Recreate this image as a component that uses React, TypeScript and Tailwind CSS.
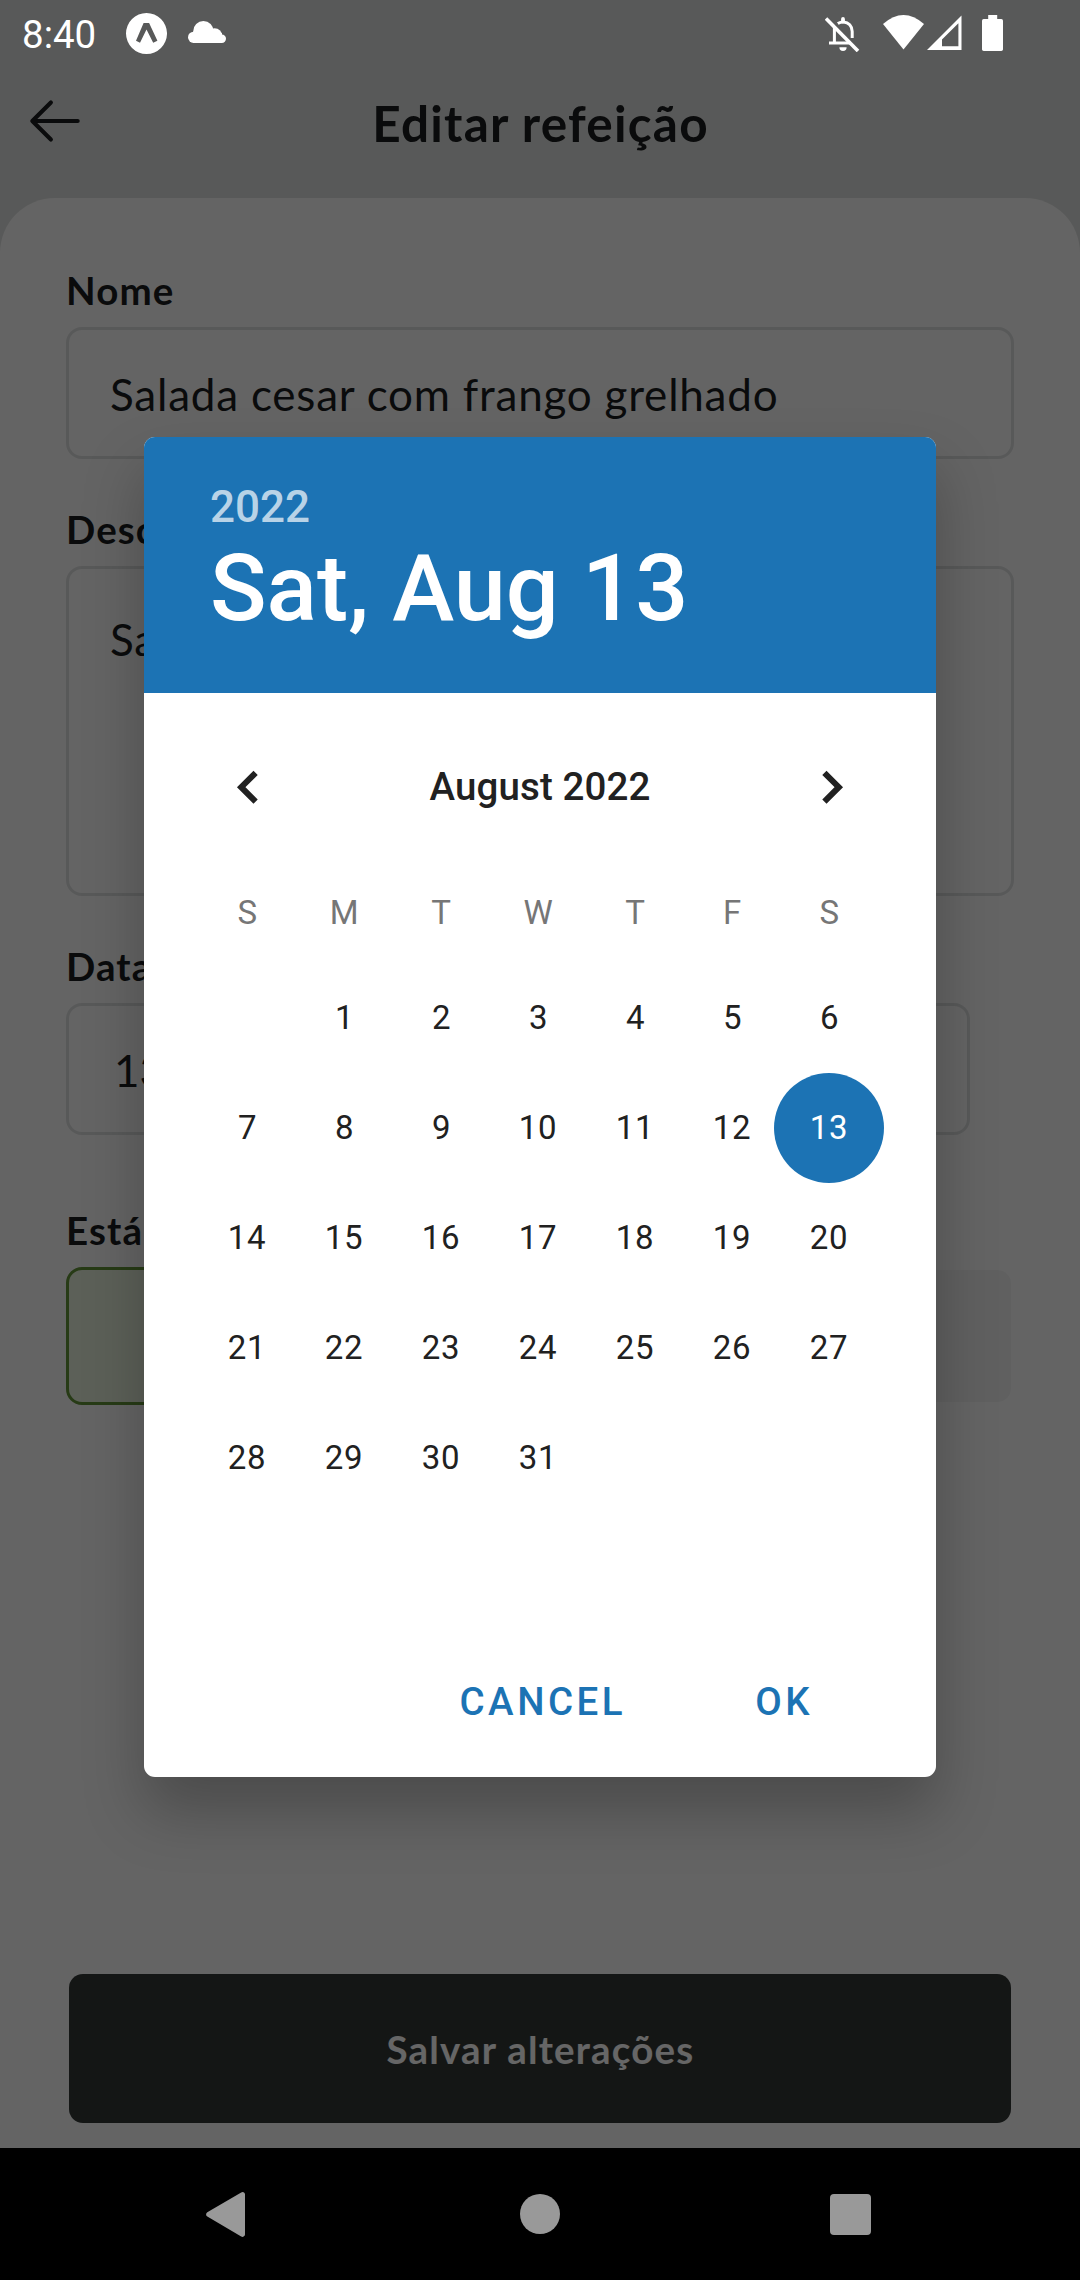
import type { ReactNode } from "react";
import { PiArrowLeft } from "react-icons/pi";

const WEEKDAYS = ["S", "M", "T", "W", "T", "F", "S"];
const SELECTED_DAY = 13;
const FIRST_WEEKDAY = 1;
const DAYS_IN_MONTH = 31;

function ExpoIcon() {
  return (
    <svg className="h-[41px] w-[41px]" viewBox="0 0 41 41">
      <path
        fill="#fff"
        fillRule="evenodd"
        d="M20.5 0a20.5 20.5 0 1 1 0 41a20.5 20.5 0 0 1 0-41ZM17.6 10H23.1L31.4 27.8L27.2 29.8L20.5 16.4L14 29.8L10 27.8Z"
      />
    </svg>
  );
}

function CloudIcon() {
  return (
    <svg className="h-[22px] w-[38px]" viewBox="0 0 38 22" fill="#fff">
      <circle cx="15.4" cy="10.2" r="10.2" />
      <circle cx="26.5" cy="15" r="7.8" />
      <circle cx="5.6" cy="16.3" r="5.6" />
      <circle cx="33.8" cy="17.8" r="4.2" />
      <rect x="5" y="12" width="29" height="10" />
    </svg>
  );
}

function BellOffIcon() {
  return (
    <svg className="h-[35px] w-[35px]" viewBox="0 0 35 35" fill="none" stroke="#fff">
      <path strokeWidth="3" d="M9.4 10v16M4 26.1h22" />
      <path strokeWidth="3" d="M12.8 6.6C15 5.2 17 4.8 18.6 4.9C23.5 5.2 27.2 9 27.2 14.5V21" />
      <path strokeWidth="3.8" strokeLinecap="round" d="M18 2v2.5" />
      <path strokeWidth="3.6" d="M1 1.4L33 34" />
      <path stroke="none" fill="#fff" d="M14.4 30.2h7.2a3.6 3.8 0 0 1-7.2 0Z" />
    </svg>
  );
}

function WifiIcon() {
  return (
    <svg className="h-[35px] w-[41px]" viewBox="0 0 41 35">
      <path fill="#fff" d="M0 9Q20.5-9 41 9L20.5 34.5Z" />
    </svg>
  );
}

function SignalIcon() {
  return (
    <svg className="h-[35px] w-[35px]" viewBox="0 0 35 35">
      <path fill="#fff" fillRule="evenodd" d="M0 35L34.5 .5V35ZM15 24.6V31.3H31.4V8.2Z" />
    </svg>
  );
}

function BatteryIcon() {
  return (
    <svg className="h-[36px] w-[21px]" viewBox="0 0 21 36">
      <path
        fill="#fff"
        d="M6.2 0H15.2V4H19.3A1.7 1.7 0 0 1 21 5.7V34.2A1.7 1.7 0 0 1 19.3 36H1.7A1.7 1.7 0 0 1 0 34.2V5.7A1.7 1.7 0 0 1 1.7 4H6.2Z"
      />
    </svg>
  );
}

function Chevron({ direction }: { direction: "left" | "right" }) {
  return (
    <svg className="h-[66px] w-[66px]" viewBox="0 0 66 66" fill="none" stroke="currentColor" strokeWidth="6">
      <path d={direction === "left" ? "M40.6 18.8L26.2 33.2L40.6 47.6" : "M25.4 18.8L39.8 33.2L25.4 47.6"} />
    </svg>
  );
}

function StatusBar() {
  return (
    <div className="flex h-[66px] items-start pr-[77px] pl-[22px]">
      <span className="mt-[9px] w-[104px] font-['Roboto',sans-serif] text-[38.5px] leading-[52px] text-white">
        8:40
      </span>
      <div className="mt-[13px]">
        <ExpoIcon />
      </div>
      <div className="mt-[21px] ml-[21px]">
        <CloudIcon />
      </div>
      <div className="mt-[16.5px] ml-auto">
        <BellOffIcon />
      </div>
      <div className="mt-[15px] ml-[23px]">
        <WifiIcon />
      </div>
      <div className="mt-[15px] ml-[3px]">
        <SignalIcon />
      </div>
      <div className="mt-[15px] ml-[20px]">
        <BatteryIcon />
      </div>
    </div>
  );
}

function Label({ children }: { children: ReactNode }) {
  return (
    <div className="mb-[11px] text-[38.5px] leading-[52px] font-bold tracking-[1.1px] whitespace-nowrap">
      {children}
    </div>
  );
}

function MealForm() {
  return (
    <div className="flex flex-1 flex-col rounded-t-[55px] bg-[#fafafa] px-[66px] pt-[66px] pb-[25px]">
      <Label>Nome</Label>
      <div className="mb-[44px] flex h-[132px] items-center rounded-[16px] border-[3px] border-[#dddedf] pt-[2px] pl-[41px] text-[44px] leading-[60px] tracking-[0.78px]">
        Salada cesar com frango grelhado
      </div>
      <Label>Descrição</Label>
      <div className="mb-[44px] h-[330px] rounded-[16px] border-[3px] border-[#dddedf] pt-[40px] pl-[41px] text-[44px] leading-[60px] tracking-[0.78px]">
        Salada
      </div>
      <Label>Data</Label>
      <div className="mb-[69px] flex h-[132px] w-[904px] items-center rounded-[16px] border-[3px] border-[#dddedf] pt-[2px] pl-[45px] text-[44px] leading-[60px]">
        13
      </div>
      <Label>Está</Label>
      <div className="flex gap-[12px]">
        <div className="h-[138px] flex-1 rounded-[16px] border-[3px] border-[#639339] bg-[#e5f0db]" />
        <div className="my-[3px] mr-[3px] h-[132px] flex-1 rounded-[14px] bg-[#eff0f0]" />
      </div>
      <div className="mx-[3px] mt-auto flex h-[149px] items-center justify-center rounded-[14px] bg-[#333836] pt-[1px] pl-[1px] text-[38.5px] leading-[52px] font-bold tracking-[1.2px] text-white">
        Salvar alterações
      </div>
    </div>
  );
}

function DatePicker() {
  const cells: (number | null)[] = [
    ...Array.from({ length: FIRST_WEEKDAY }, () => null),
    ...Array.from({ length: DAYS_IN_MONTH }, (_, i) => i + 1),
  ];
  return (
    <div className="absolute top-[437px] left-[144px] flex h-[1340px] w-[792px] flex-col overflow-hidden rounded-[11px] bg-white font-['Roboto',sans-serif] text-[#212121] shadow-[0_34px_60px_rgba(0,0,0,0.25)]">
      <div className="h-[256px] bg-[#1c73b4] pt-[44px] pl-[66px] font-medium text-white">
        <div className="text-[44px] leading-[52px] text-white/70">2022</div>
        <div className="text-[93.5px] leading-[110px]">Sat, Aug 13</div>
      </div>
      <div className="mt-[61px] flex h-[66px] items-center justify-between px-[71px]">
        <Chevron direction="left" />
        <span className="text-[38.5px] leading-[52px] font-medium tracking-[0.1px]">August 2022</span>
        <Chevron direction="right" />
      </div>
      <div className="mt-[42px] ml-[54.5px] grid w-[679px] grid-cols-7 text-center text-[33px] tracking-[0.8px]">
        {WEEKDAYS.map((d, i) => (
          <div key={i} className="h-[101px] pl-[1.2px] leading-[101px] text-[#767676]">
            {d}
          </div>
        ))}
        {cells.map((d, i) =>
          d === SELECTED_DAY ? (
            <div key={i} className="-mx-[6.5px] h-[110px] rounded-full bg-[#1c73b4] leading-[110px] text-white">
              {d}
            </div>
          ) : (
            <div key={i} className={d !== null && d < 10 ? "h-[110px] pl-[1.2px] leading-[110px]" : "h-[110px] leading-[110px]"}>
              {d}
            </div>
          ),
        )}
      </div>
      <div className="mt-auto mb-[50px] flex h-[50px] items-center justify-end gap-[129px] pr-[123px] text-[38.5px] leading-[50px] font-medium tracking-[3.5px] text-[#1c73b4]">
        <span>CANCEL</span>
        <span>OK</span>
      </div>
    </div>
  );
}

function NavigationBar() {
  return (
    <div className="flex h-[132px] items-center bg-black pl-[206px]">
      <svg className="mt-[1px] h-[45px] w-[39px]" viewBox="0 0 39 45">
        <path
          fill="#999"
          d="M39 2.2V42.6A2.4 2.4 0 0 1 35.2 44.4L1.3 24.6A2.6 2.6 0 0 1 1.3 20.2L35.2 .5A2.4 2.4 0 0 1 39 2.2Z"
        />
      </svg>
      <div className="ml-[275px] h-[40px] w-[40px] rounded-full bg-[#999]" />
      <div className="mt-[1px] ml-[270px] h-[41px] w-[41px] rounded-[4px] bg-[#999]" />
    </div>
  );
}

export default function App() {
  return (
    <div className="relative flex h-[2280px] w-[1080px] flex-col overflow-hidden bg-[#dddfde] font-['Lato','Noto_Sans',sans-serif] text-[#1b1d1e]">
      <header className="relative flex h-[198px] items-center justify-center pt-[66px] pb-[18px]">
        <PiArrowLeft className="absolute top-[88px] left-[22px] h-[66px] w-[66px]" />
        <h1 className="pl-[1px] text-[49.5px] leading-[66px] font-bold tracking-[1.2px]">Editar refeição</h1>
      </header>
      <MealForm />
      <NavigationBar />
      <div className="absolute inset-x-0 top-0 h-[2148px] bg-black/60">
        <StatusBar />
        <DatePicker />
      </div>
    </div>
  );
}
